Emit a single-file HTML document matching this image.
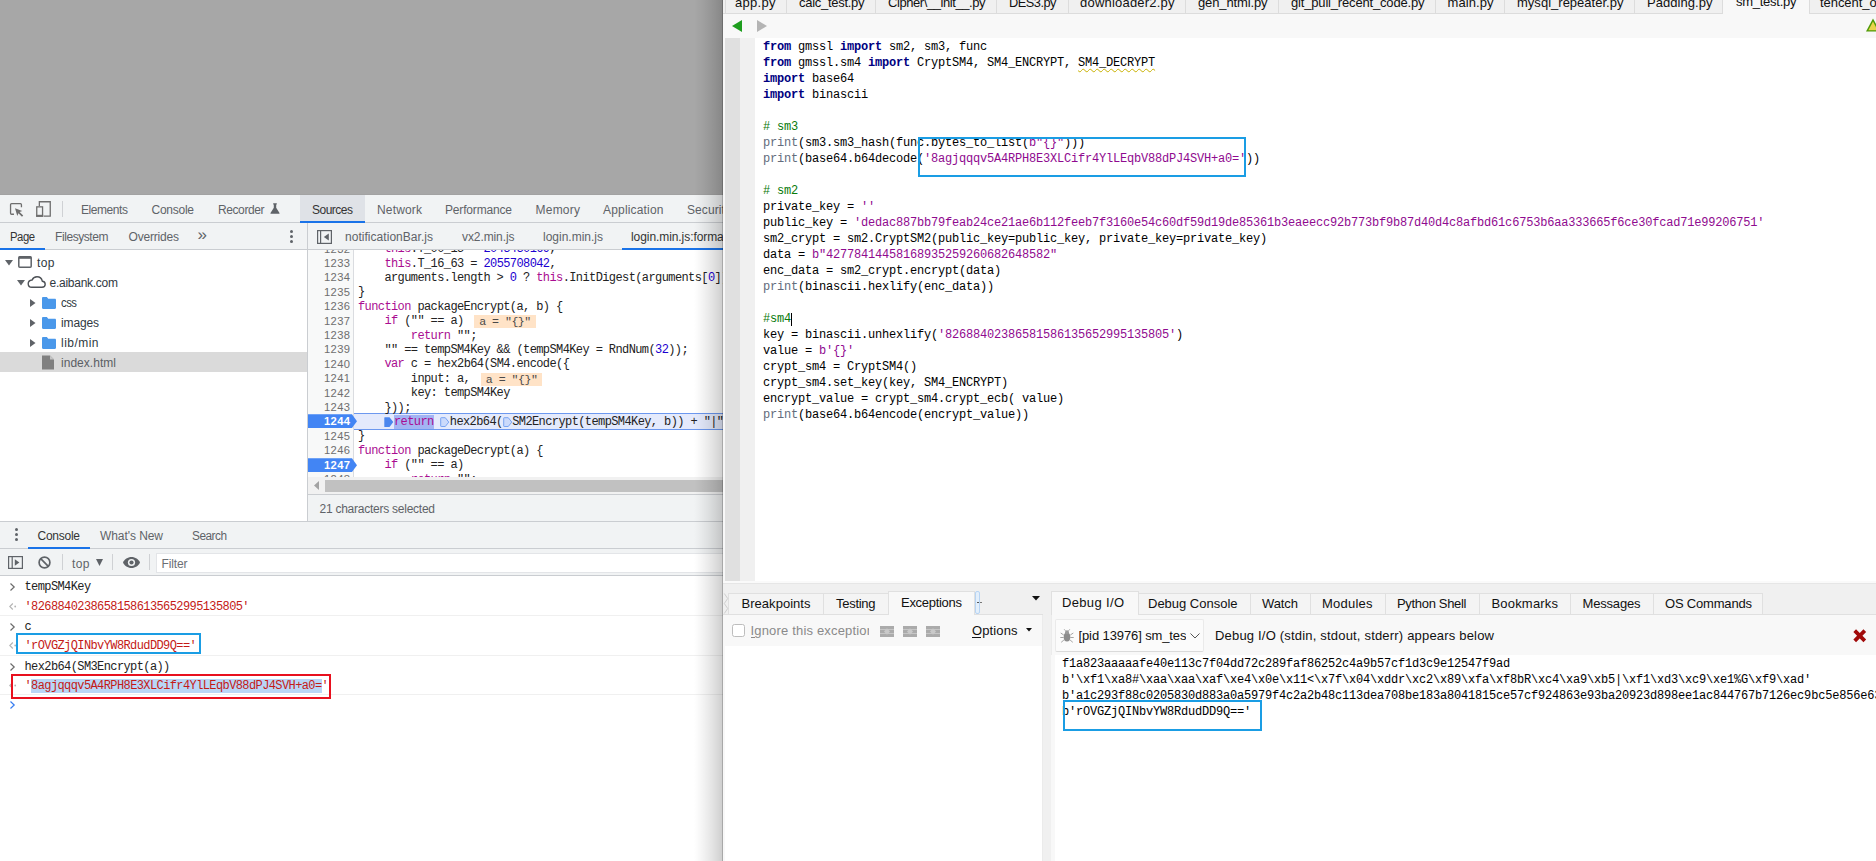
<!DOCTYPE html>
<html><head><meta charset="utf-8"><title>devtools + ide</title>
<style>
html,body{margin:0;padding:0}
body{width:1876px;height:861px;overflow:hidden;background:#fff;position:relative;font-family:"Liberation Sans", sans-serif}
.a{position:absolute;box-sizing:border-box}
.t{position:absolute;white-space:pre}
.s{font-family:"Liberation Sans", sans-serif}
.m{font-family:"Liberation Mono", monospace}

.cl{position:absolute;left:358px;white-space:pre;font-family:"Liberation Mono",monospace;font-size:12px;letter-spacing:-0.6px;line-height:14.4px;height:14.4px;color:#222;margin-top:0.8px}
.ln{position:absolute;left:308px;width:42.2px;text-align:right;white-space:pre;font-family:"Liberation Sans",sans-serif;font-size:11.2px;letter-spacing:0.3px;line-height:14.4px;height:14.4px;color:#6e6e6e}
.k{color:#aa0d91}.n{color:#1c00cf}
.w{display:inline-block;background:#ffe3c7;color:#4a4a4a;font-size:11.6px;letter-spacing:-0.5px;margin-left:10.5px;padding:0 5px;height:13px;line-height:13px;vertical-align:top;margin-top:0.7px}
.bm{display:inline-block;width:9.6px;letter-spacing:0;height:14.4px;vertical-align:top;position:relative}
.con{position:absolute;left:24.5px;white-space:pre;font-family:"Liberation Mono",monospace;font-size:12px;letter-spacing:-0.6px;line-height:16px;color:#222}
.str{color:#c41a16}
.pl{position:absolute;left:763px;white-space:pre;font-family:"Liberation Mono",monospace;font-size:12px;letter-spacing:-0.2px;line-height:16px;height:16px;color:#000}
.kw{color:#00007f;font-weight:bold;letter-spacing:-0.2px}
.bi{color:#636c7c}.ps{color:#8f0a8f}.pc{color:#0a7a0a}
.out{position:absolute;left:1062px;white-space:pre;font-family:"Liberation Mono",monospace;font-size:12px;letter-spacing:-0.2px;line-height:16px;height:16px;color:#000}
svg{position:absolute;overflow:visible}
</style></head>
<body>
<div class="a" id="devtools" style="left:0;top:0;width:724px;height:861px;overflow:hidden;background:#fff"><div class="a" style="left:0px;top:0px;width:724px;height:195px;background:#a7a7a7;"></div><div class="a" style="left:0px;top:194px;width:724px;height:1px;background:#a2a2a2;"></div><div class="a" style="left:0px;top:195px;width:724px;height:28px;background:#f1f3f4;border-bottom:1px solid #cacdd1;"></div><div class="a" style="left:300px;top:195px;width:65px;height:27px;background:#dfe2e7;"></div><div class="a" style="left:300px;top:221px;width:65px;height:2px;background:#1a73e8;"></div><svg style="left:9px;top:202px" width="16" height="16" viewBox="0 0 16 16"><path d="M12.450 5.200v-2.550a1 1 0 0 0-1-1h-8.900a1 1 0 0 0-1 1v8.600a1 1 0 0 0 1 1h2.400" fill="none" stroke="#6e6e6e" stroke-width="1.300"/><path d="M6 6.200l7.300 2.700-2.700 1.100 3.600 3.600-1.200 1.200-3.600-3.600-1.100 2.700z" fill="#6e6e6e"/></svg><svg style="left:35px;top:200px" width="17" height="18" viewBox="0 0 17 18"><path d="M4.350 6v-4.250h10.900v14.400h-6.500" fill="none" stroke="#6e6e6e" stroke-width="1.300"/><rect x="1.750" y="6.850" width="5.800" height="9.300" fill="none" stroke="#6e6e6e" stroke-width="1.300"/><rect x="1.100" y="14.800" width="7.100" height="2" fill="#6e6e6e"/></svg><div class="a" style="left:62px;top:201px;width:1px;height:16px;background:#cfd1d4;"></div><span class="t s" style="left:81px;top:199.8px;font-size:12px;color:#5f6368;line-height:20px;letter-spacing:-0.433px;">Elements</span><span class="t s" style="left:151.5px;top:199.8px;font-size:12px;color:#5f6368;line-height:20px;letter-spacing:-0.255px;">Console</span><span class="t s" style="left:218px;top:199.8px;font-size:12px;color:#5f6368;line-height:20px;letter-spacing:-0.408px;">Recorder</span><svg style="left:270px;top:203px" width="10" height="11" viewBox="0 0 10 11"><path d="M3.2 0.3h3.6v1.2h-.6v3.2l3.3 5.2c.2.4 0 .8-.5.8h-8c-.5 0-.7-.4-.5-.8l3.3-5.2v-3.2h-.6z" fill="#5f6368"/></svg><span class="t s" style="left:311.5px;top:199.8px;font-size:12px;color:#333;line-height:20px;letter-spacing:-0.500px;transform:scaleX(0.999);transform-origin:0 50%;">Sources</span><span class="t s" style="left:377px;top:199.8px;font-size:12px;color:#5f6368;line-height:20px;letter-spacing:0.164px;">Network</span><span class="t s" style="left:445px;top:199.8px;font-size:12px;color:#5f6368;line-height:20px;letter-spacing:-0.170px;">Performance</span><span class="t s" style="left:535.5px;top:199.8px;font-size:12px;color:#5f6368;line-height:20px;letter-spacing:0.231px;">Memory</span><span class="t s" style="left:603px;top:199.8px;font-size:12px;color:#5f6368;line-height:20px;letter-spacing:0.178px;">Application</span><span class="t s" style="left:687px;top:199.8px;font-size:12px;color:#5f6368;line-height:20px;letter-spacing:0.092px;">Security</span><div class="a" style="left:0px;top:223px;width:724px;height:27px;background:#f1f3f4;border-bottom:1px solid #cacdd1;"></div><div class="a" style="left:0px;top:248px;width:45px;height:2px;background:#1a73e8;"></div><span class="t s" style="left:10px;top:226.9px;font-size:12px;color:#333;line-height:20px;letter-spacing:-0.500px;transform:scaleX(0.942);transform-origin:0 50%;">Page</span><span class="t s" style="left:55px;top:226.9px;font-size:12px;color:#5f6368;line-height:20px;letter-spacing:-0.427px;">Filesystem</span><span class="t s" style="left:128.5px;top:226.9px;font-size:12px;color:#5f6368;line-height:20px;letter-spacing:-0.189px;">Overrides</span><span class="t s" style="left:197.5px;top:225.0px;font-size:17px;color:#5f6368;line-height:20px;letter-spacing:0.000px;">»</span><div class="a" style="left:290px;top:229.5px;width:3px;height:3px;background:#5f6368;border-radius:50%;"></div><div class="a" style="left:290px;top:234.5px;width:3px;height:3px;background:#5f6368;border-radius:50%;"></div><div class="a" style="left:290px;top:239.5px;width:3px;height:3px;background:#5f6368;border-radius:50%;"></div><div class="a" style="left:307px;top:223px;width:1px;height:299px;background:#cacdd1;"></div><svg style="left:317px;top:230px" width="15" height="14" viewBox="0 0 15 14"><rect x="0.6" y="0.6" width="13.8" height="12.8" fill="none" stroke="#5f6368" stroke-width="1.2"/><path d="M3.6 0.6v12.8" stroke="#5f6368" stroke-width="1.2"/><path d="M11.800 3.400v7.200l-5-3.600z" fill="#5f6368"/></svg><span class="t s" style="left:345px;top:226.9px;font-size:12px;color:#5f6368;line-height:20px;letter-spacing:0.036px;">notificationBar.js</span><span class="t s" style="left:462px;top:226.9px;font-size:12px;color:#5f6368;line-height:20px;letter-spacing:-0.094px;">vx2.min.js</span><span class="t s" style="left:543px;top:226.9px;font-size:12px;color:#5f6368;line-height:20px;letter-spacing:-0.003px;">login.min.js</span><span class="t s" style="left:631px;top:226.9px;font-size:12px;color:#333;line-height:20px;letter-spacing:-0.074px;">login.min.js:formatted</span><div class="a" style="left:622px;top:248px;width:110px;height:2px;background:#1a73e8;"></div><svg style="left:5px;top:260px" width="8" height="6" viewBox="0 0 8 6"><path d="M0 0h8l-4 5.5z" fill="#5f6368"/></svg><svg style="left:18px;top:256px" width="14" height="12" viewBox="0 0 14 12"><rect x="0.8" y="0.8" width="12.400" height="10.400" rx="1" fill="none" stroke="#5f6368" stroke-width="1.5"/><rect x="0.8" y="0.4" width="12.400" height="2.400" fill="#5f6368"/></svg><span class="t s" style="left:37px;top:253.1px;font-size:12px;color:#303942;line-height:20px;letter-spacing:0.406px;">top</span><svg style="left:17px;top:280px" width="8" height="6" viewBox="0 0 8 6"><path d="M0 0h8l-4 5.5z" fill="#5f6368"/></svg><svg style="left:26.500px;top:276px" width="19" height="12" viewBox="0 0 19 12"><path d="M4.8 11.200h10.200c1.800 0 3.200-1.300 3.200-3 0-1.600-1.300-2.900-2.900-3-.5-2.500-2.600-4.400-5.300-4.400-2.200 0-4.100 1.300-4.900 3.200-2.200.2-3.900 1.800-3.900 3.700 0 2 1.600 3.500 3.600 3.500z" fill="none" stroke="#4d5156" stroke-width="1.400"/></svg><span class="t s" style="left:49.5px;top:273.1px;font-size:12px;color:#303942;line-height:20px;letter-spacing:-0.261px;">e.aibank.com</span><svg style="left:30px;top:298.5px" width="6" height="8" viewBox="0 0 6 8"><path d="M0 0v8l5.5-4z" fill="#5f6368"/></svg><svg style="left:42px;top:297px" width="14" height="12" viewBox="0 0 15 12" preserveAspectRatio="none"><path d="M0 1.2c0-.7.5-1.2 1.2-1.2h4l1.5 1.7h7.1c.7 0 1.2.5 1.2 1.2v7.9c0 .7-.5 1.2-1.2 1.2h-12.600c-.7 0-1.2-.5-1.2-1.2z" fill="#4a98ea"/></svg><span class="t s" style="left:61px;top:293.1px;font-size:12px;color:#303942;line-height:20px;letter-spacing:-0.500px;transform:scaleX(0.941);transform-origin:0 50%;">css</span><svg style="left:30px;top:318.5px" width="6" height="8" viewBox="0 0 6 8"><path d="M0 0v8l5.5-4z" fill="#5f6368"/></svg><svg style="left:42px;top:317px" width="14" height="12" viewBox="0 0 15 12" preserveAspectRatio="none"><path d="M0 1.2c0-.7.5-1.2 1.2-1.2h4l1.5 1.7h7.1c.7 0 1.2.5 1.2 1.2v7.9c0 .7-.5 1.2-1.2 1.2h-12.600c-.7 0-1.2-.5-1.2-1.2z" fill="#4a98ea"/></svg><span class="t s" style="left:61px;top:313.1px;font-size:12px;color:#303942;line-height:20px;letter-spacing:-0.138px;">images</span><svg style="left:30px;top:338.5px" width="6" height="8" viewBox="0 0 6 8"><path d="M0 0v8l5.5-4z" fill="#5f6368"/></svg><svg style="left:42px;top:337px" width="14" height="12" viewBox="0 0 15 12" preserveAspectRatio="none"><path d="M0 1.2c0-.7.5-1.2 1.2-1.2h4l1.5 1.7h7.1c.7 0 1.2.5 1.2 1.2v7.9c0 .7-.5 1.2-1.2 1.2h-12.600c-.7 0-1.2-.5-1.2-1.2z" fill="#4a98ea"/></svg><span class="t s" style="left:61px;top:333.1px;font-size:12px;color:#303942;line-height:20px;letter-spacing:0.469px;">lib/min</span><div class="a" style="left:0px;top:352px;width:307px;height:20px;background:#dadada;"></div><svg style="left:42px;top:355px" width="12" height="15" viewBox="0 0 12 14"><path d="M0 0h8l4 4v10h-12z" fill="#808080"/><path d="M8 0v4h4z" fill="#c4c4c4"/></svg><span class="t s" style="left:61px;top:353.1px;font-size:12px;color:#5a5e64;line-height:20px;letter-spacing:0.033px;">index.html</span><div class="a" style="left:308px;top:250px;width:416px;height:227px;overflow:hidden;background:#fff"><div class="a" style="left:-308px;top:-250px;width:724px;height:800px"><div class="a" style="left:308px;top:250px;width:45.5px;height:227px;background:#f8f9f9;border-right:1px solid #dadce0;"></div><div class="a" style="left:354px;top:413.40000000000293px;width:370px;height:16.2px;background:#e4eafc;border-top:1px solid #6c98ef;border-bottom:1px solid #6c98ef;"></div><svg style="left:308px;top:414.3px" width="50" height="14.400" viewBox="0 0 50 14.400"><path d="M0 0.300h44l5 6.900-5 6.900h-44z" fill="#4285f4"/></svg><svg style="left:308px;top:457.5px" width="50" height="14.400" viewBox="0 0 50 14.400"><path d="M0 0.300h44l5 6.900-5 6.900h-44z" fill="#4285f4"/></svg><div class="ln" style="top:241.5px;">1232</div><div class="cl" style="top:241.5px">    <span class="k">this</span>.T_00_15 = <span class="n">2043430169</span>,</div><div class="ln" style="top:255.9px;">1233</div><div class="cl" style="top:255.9px">    <span class="k">this</span>.T_16_63 = <span class="n">2055708042</span>,</div><div class="ln" style="top:270.3px;">1234</div><div class="cl" style="top:270.3px">    arguments.length &gt; <span class="n">0</span> ? <span class="k">this</span>.InitDigest(arguments[<span class="n">0</span>]) : <span class="k">this</span>.Init()</div><div class="ln" style="top:284.7px;">1235</div><div class="cl" style="top:284.7px">}</div><div class="ln" style="top:299.1px;">1236</div><div class="cl" style="top:299.1px"><span class="k">function</span> packageEncrypt(a, b) {</div><div class="ln" style="top:313.5px;">1237</div><div class="cl" style="top:313.5px">    <span class="k">if</span> (&quot;&quot; == a)<span class="w">a = &quot;{}&quot;</span></div><div class="ln" style="top:327.9px;">1238</div><div class="cl" style="top:327.9px">        <span class="k">return</span> &quot;&quot;;</div><div class="ln" style="top:342.3px;">1239</div><div class="cl" style="top:342.3px">    &quot;&quot; == tempSM4Key &amp;&amp; (tempSM4Key = RndNum(<span class="n">32</span>));</div><div class="ln" style="top:356.7px;">1240</div><div class="cl" style="top:356.7px">    <span class="k">var</span> c = hex2b64(SM4.encode({</div><div class="ln" style="top:371.1px;">1241</div><div class="cl" style="top:371.1px">        input: a,<span class="w">a = &quot;{}&quot;</span></div><div class="ln" style="top:385.5px;">1242</div><div class="cl" style="top:385.5px">        key: tempSM4Key</div><div class="ln" style="top:399.9px;">1243</div><div class="cl" style="top:399.9px">    }));</div><div class="ln" style="top:414.3px;color:#fff;font-weight:bold;">1244</div><div class="cl" style="top:414.3px">    <span class="bm"><svg style="left:0;top:1.500px" width="9.600" height="10.200" viewBox="0 0 9.600 10.200"><path d="M0.300 0.800q0-.5.500-.5h4.700l3.800 4.800-3.800 4.800h-4.700q-.5 0-.5-.5z" fill="#4a86ee"/></svg></span><span style="background:#a3b4f3"><span class="k">return</span></span> <span class="bm"><svg style="left:0;top:1.500px" width="9.600" height="10.200" viewBox="0 0 9.600 10.200"><path d="M0.700 1.200q0-.5.500-.5h4.100l3.500 4.400-3.500 4.400h-4.100q-.5 0-.5-.5z" fill="#cbdafb" stroke="#6e9df0" stroke-width="0.900"/></svg></span>hex2b64(<span class="bm"><svg style="left:0;top:1.500px" width="9.600" height="10.200" viewBox="0 0 9.600 10.200"><path d="M0.700 1.200q0-.5.500-.5h4.100l3.500 4.400-3.500 4.400h-4.100q-.5 0-.5-.5z" fill="#cbdafb" stroke="#6e9df0" stroke-width="0.900"/></svg></span>SM2Encrypt(tempSM4Key, b)) + &quot;|&quot; + c</div><div class="ln" style="top:428.7px;">1245</div><div class="cl" style="top:428.7px">}</div><div class="ln" style="top:443.1px;">1246</div><div class="cl" style="top:443.1px"><span class="k">function</span> packageDecrypt(a) {</div><div class="ln" style="top:457.5px;color:#fff;font-weight:bold;">1247</div><div class="cl" style="top:457.5px">    <span class="k">if</span> (&quot;&quot; == a)</div><div class="ln" style="top:471.9px;">1248</div><div class="cl" style="top:471.9px">        <span class="k">return</span> &quot;&quot;;</div></div></div><div class="a" style="left:308px;top:477px;width:416px;height:17px;background:#f1f1f1;"></div><div class="a" style="left:325px;top:479.5px;width:400px;height:12.5px;background:#c1c1c1;"></div><svg style="left:313.500px;top:481px" width="5" height="9" viewBox="0 0 5 9"><path d="M5 0v9l-5-4.500z" fill="#a3a3a3"/></svg><div class="a" style="left:308px;top:494px;width:416px;height:28px;background:#f1f3f4;border-top:1px solid #cacdd1;border-bottom:1px solid #cacdd1;"></div><div class="a" style="left:0px;top:521px;width:308px;height:1px;background:#cacdd1;"></div><span class="t s" style="left:319.5px;top:499.3px;font-size:12px;color:#5f6368;line-height:20px;letter-spacing:-0.249px;">21 characters selected</span><div class="a" style="left:0px;top:522px;width:724px;height:27px;background:#f1f3f4;border-bottom:1px solid #cacdd1;"></div><div class="a" style="left:15px;top:527.5px;width:3px;height:3px;background:#5f6368;border-radius:50%;"></div><div class="a" style="left:15px;top:532.5px;width:3px;height:3px;background:#5f6368;border-radius:50%;"></div><div class="a" style="left:15px;top:537.5px;width:3px;height:3px;background:#5f6368;border-radius:50%;"></div><div class="a" style="left:28px;top:547px;width:62px;height:2px;background:#1a73e8;"></div><span class="t s" style="left:37.5px;top:526.3px;font-size:12px;color:#333;line-height:20px;letter-spacing:-0.255px;">Console</span><span class="t s" style="left:100px;top:526.3px;font-size:12px;color:#5f6368;line-height:20px;letter-spacing:-0.071px;">What&#x27;s New</span><span class="t s" style="left:191.5px;top:526.3px;font-size:12px;color:#5f6368;line-height:20px;letter-spacing:-0.500px;transform:scaleX(0.985);transform-origin:0 50%;">Search</span><div class="a" style="left:0px;top:549px;width:724px;height:27px;background:#f1f3f4;border-bottom:1px solid #cacdd1;"></div><svg style="left:8px;top:555.500px" width="15" height="13" viewBox="0 0 15 13"><rect x="0.6" y="0.6" width="13.800" height="11.800" fill="none" stroke="#5f6368" stroke-width="1.200"/><path d="M4.200 0.6v11.800" stroke="#5f6368" stroke-width="1.200"/><path d="M6.800 3.300v6.400l4.600-3.200z" fill="#5f6368"/></svg><svg style="left:38px;top:555.500px" width="13" height="13" viewBox="0 0 13 13"><circle cx="6.500" cy="6.500" r="5.400" fill="none" stroke="#5f6368" stroke-width="1.700"/><path d="M2.700 2.700l7.600 7.600" stroke="#5f6368" stroke-width="1.700"/></svg><div class="a" style="left:62px;top:554px;width:1px;height:16px;background:#cfd1d4;"></div><span class="t s" style="left:72px;top:553.8px;font-size:12px;color:#5f6368;line-height:20px;letter-spacing:0.406px;">top</span><svg style="left:96px;top:558.500px" width="7" height="7" viewBox="0 0 8 7" preserveAspectRatio="none"><path d="M0 0h8l-4 7z" fill="#5f6368"/></svg><div class="a" style="left:112px;top:554px;width:1px;height:16px;background:#cfd1d4;"></div><svg style="left:122.500px;top:556.500px" width="17" height="11" viewBox="0 0 17 11"><path d="M8.500 0c-3.800 0-7 2.300-8.500 5.500 1.500 3.200 4.700 5.500 8.500 5.500s7-2.300 8.500-5.500c-1.500-3.200-4.700-5.500-8.500-5.500z" fill="#5f6368"/><circle cx="8.500" cy="5.500" r="3.600" fill="#f1f3f4"/><circle cx="8.500" cy="5.500" r="2.100" fill="#5f6368"/></svg><div class="a" style="left:149px;top:554px;width:1px;height:16px;background:#cfd1d4;"></div><div class="a" style="left:156px;top:552.5px;width:570px;height:20px;background:#fff;border:1px solid #e3e5e8;"></div><span class="t s" style="left:161.5px;top:554.3px;font-size:12px;color:#6b6f74;line-height:20px;letter-spacing:-0.134px;">Filter</span><svg style="left:10px;top:583.2px" width="5" height="8" viewBox="0 0 5 8"><path d="M0.500 0.500l3.700 3.500-3.700 3.500" fill="none" stroke="#6b6b6b" stroke-width="1.200"/></svg><div class="con" style="top:579.2px">tempSM4Key</div><svg style="left:8.500px;top:603.2px" width="8" height="7" viewBox="0 0 8 7"><path d="M3.800 0.500l-3 3 3 3" fill="none" stroke="#b3b3b3" stroke-width="1.100"/><circle cx="6.200" cy="3.500" r="0.900" fill="#b3b3b3"/></svg><div class="con str" style="top:598.7px">&#x27;82688402386581586135652995135805&#x27;</div><svg style="left:10px;top:622.5px" width="5" height="8" viewBox="0 0 5 8"><path d="M0.500 0.500l3.700 3.500-3.700 3.500" fill="none" stroke="#6b6b6b" stroke-width="1.200"/></svg><div class="con" style="top:618.5px">c</div><svg style="left:8.500px;top:642.1px" width="8" height="7" viewBox="0 0 8 7"><path d="M3.800 0.500l-3 3 3 3" fill="none" stroke="#b3b3b3" stroke-width="1.100"/><circle cx="6.200" cy="3.500" r="0.900" fill="#b3b3b3"/></svg><div class="con str" style="top:637.6px">&#x27;rOVGZjQINbvYW8RdudDD9Q==&#x27;</div><svg style="left:10px;top:662.5px" width="5" height="8" viewBox="0 0 5 8"><path d="M0.500 0.500l3.700 3.500-3.700 3.500" fill="none" stroke="#6b6b6b" stroke-width="1.200"/></svg><div class="con" style="top:658.5px">hex2b64(SM3Encrypt(a))</div><svg style="left:8.500px;top:682.4px" width="8" height="7" viewBox="0 0 8 7"><path d="M3.800 0.500l-3 3 3 3" fill="none" stroke="#b3b3b3" stroke-width="1.100"/><circle cx="6.200" cy="3.500" r="0.900" fill="#b3b3b3"/></svg><div class="con str" style="top:677.9px">'<span style="background:#b9d6f6">8agjqqqv5A4RPH8E3XLCifr4YlLEqbV88dPJ4SVH+a0=</span>'</div><div class="a" style="left:0px;top:615px;width:724px;height:1px;background:#f0f0f0;"></div><div class="a" style="left:0px;top:655px;width:724px;height:1px;background:#f0f0f0;"></div><div class="a" style="left:0px;top:693.5px;width:724px;height:1px;background:#f0f0f0;"></div><svg style="left:10px;top:700.5px" width="5" height="8" viewBox="0 0 5 8"><path d="M0.500 0.500l3.700 3.500-3.700 3.500" fill="none" stroke="#367cf1" stroke-width="1.200"/></svg><div class="a" style="left:16px;top:633px;width:185px;height:21px;border:2px solid #1a9de4;"></div><div class="a" style="left:11px;top:674px;width:320px;height:24.5px;border:2px solid #e8101e;"></div><div class="a" style="left:694px;top:0px;width:28px;height:861px;background:linear-gradient(to right,rgba(0,0,0,0) 0%,rgba(0,0,0,.035) 25%,rgba(0,0,0,.08) 50%,rgba(0,0,0,.13) 75%,rgba(0,0,0,.19) 100%);"></div><div class="a" style="left:722px;top:0px;width:1px;height:861px;background:rgba(0,0,0,.34);"></div></div><div class="a" id="ide" style="left:723px;top:0;width:1153px;height:861px;overflow:hidden;background:#f0f0f0"><div class="a" style="left:-723px;top:0;width:1876px;height:861px"><div class="a" style="left:723px;top:0px;width:1153px;height:14px;background:#f0f0f0;border-bottom:1px solid #dcdcdc;"></div><div class="a" style="left:725px;top:0px;width:1px;height:13px;background:#dcdcdc;"></div><div class="a" style="left:786px;top:0px;width:1px;height:13px;background:#dcdcdc;"></div><div class="a" style="left:875px;top:0px;width:1px;height:13px;background:#dcdcdc;"></div><div class="a" style="left:996px;top:0px;width:1px;height:13px;background:#dcdcdc;"></div><div class="a" style="left:1068px;top:0px;width:1px;height:13px;background:#dcdcdc;"></div><div class="a" style="left:1185px;top:0px;width:1px;height:13px;background:#dcdcdc;"></div><div class="a" style="left:1278px;top:0px;width:1px;height:13px;background:#dcdcdc;"></div><div class="a" style="left:1435px;top:0px;width:1px;height:13px;background:#dcdcdc;"></div><div class="a" style="left:1504px;top:0px;width:1px;height:13px;background:#dcdcdc;"></div><div class="a" style="left:1634px;top:0px;width:1px;height:13px;background:#dcdcdc;"></div><div class="a" style="left:1722px;top:0px;width:88px;height:14px;background:#f8f8f8;border-left:1px solid #dcdcdc;border-right:1px solid #dcdcdc;"></div><span class="t s" style="left:735px;top:-6.9px;font-size:13px;color:#111;line-height:20px;letter-spacing:0.291px;">app.py</span><span class="t s" style="left:799px;top:-6.9px;font-size:13px;color:#111;line-height:20px;letter-spacing:-0.287px;">calc_test.py</span><span class="t s" style="left:888px;top:-6.9px;font-size:13px;color:#111;line-height:20px;letter-spacing:-0.429px;">Cipher\__init__.py</span><span class="t s" style="left:1009px;top:-6.9px;font-size:13px;color:#111;line-height:20px;letter-spacing:-0.500px;transform:scaleX(0.983);transform-origin:0 50%;">DES3.py</span><span class="t s" style="left:1080px;top:-6.9px;font-size:13px;color:#111;line-height:20px;letter-spacing:0.208px;">downloader2.py</span><span class="t s" style="left:1198px;top:-6.9px;font-size:13px;color:#111;line-height:20px;letter-spacing:-0.133px;">gen_html.py</span><span class="t s" style="left:1291px;top:-6.9px;font-size:13px;color:#111;line-height:20px;letter-spacing:-0.174px;">git_pull_recent_code.py</span><span class="t s" style="left:1447.5px;top:-6.9px;font-size:13px;color:#111;line-height:20px;letter-spacing:0.078px;">main.py</span><span class="t s" style="left:1517px;top:-6.9px;font-size:13px;color:#111;line-height:20px;letter-spacing:0.017px;">mysql_repeater.py</span><span class="t s" style="left:1647px;top:-6.9px;font-size:13px;color:#111;line-height:20px;letter-spacing:0.049px;">Padding.py</span><span class="t s" style="left:1820px;top:-6.9px;font-size:13px;color:#111;line-height:20px;letter-spacing:-0.050px;">tencent_oauth.py</span><span class="t s" style="left:1736px;top:-8.5px;font-size:13px;color:#111;line-height:20px;letter-spacing:-0.262px;">sm_test.py</span><div class="a" style="left:723px;top:14px;width:1153px;height:23.5px;background:#f8f8f8;"></div><svg style="left:732px;top:20px" width="10" height="12" viewBox="0 0 10 12"><path d="M10 0v12l-10-6z" fill="#1e9e1e"/></svg><svg style="left:757px;top:20px" width="10" height="12" viewBox="0 0 10 12"><path d="M0 0v12l10-6z" fill="#b4b4b4"/></svg><svg style="left:1866px;top:18px" width="14" height="14" viewBox="0 0 14 14"><path d="M7 0.500l7 13h-14z" fill="#4e9a06"/><path d="M7 3.500l4.600 8.700h-9.200z" fill="#e8d44d"/></svg><div class="a" style="left:723px;top:37.5px;width:1153px;height:543.5px;background:#fff;"></div><div class="a" style="left:723px;top:37.5px;width:2px;height:543.5px;background:#f8f8f8;"></div><div class="a" style="left:725px;top:37.5px;width:15px;height:543.5px;background:#e0e0e0;"></div><div class="a" style="left:740px;top:37.5px;width:15px;height:543.5px;background:#f0f0f0;"></div><div class="a" style="left:723px;top:581px;width:1153px;height:2px;background:#fafafa;"></div><div class="a" style="left:723px;top:583px;width:1153px;height:1px;background:#e6e6e6;"></div><div class="pl" style="top:39px"><span class="kw">from</span> gmssl <span class="kw">import</span> sm2, sm3, func</div><div class="pl" style="top:55px"><span class="kw">from</span> gmssl.sm4 <span class="kw">import</span> CryptSM4, SM4_ENCRYPT, <span style="text-decoration:underline wavy #c8b000 1px;text-underline-offset:2px">SM4_DECRYPT</span></div><div class="pl" style="top:71px"><span class="kw">import</span> base64</div><div class="pl" style="top:87px"><span class="kw">import</span> binascii</div><div class="pl" style="top:119px"><span class="pc"># sm3</span></div><div class="pl" style="top:135px"><span class="bi">print</span>(sm3.sm3_hash(func.bytes_to_list(<span class="ps">b&quot;{}&quot;</span>)))</div><div class="pl" style="top:151px"><span class="bi">print</span>(base64.b64decode(<span class="ps">&#x27;8agjqqqv5A4RPH8E3XLCifr4YlLEqbV88dPJ4SVH+a0=&#x27;</span>))</div><div class="pl" style="top:183px"><span class="pc"># sm2</span></div><div class="pl" style="top:199px">private_key = <span class="ps">&#x27;&#x27;</span></div><div class="pl" style="top:215px">public_key = <span class="ps">&#x27;dedac887bb79feab24ce21ae6b112feeb7f3160e54c60df59d19de85361b3eaeecc92b773bf9b87d40d4c8afbd61c6753b6aa333665f6ce30fcad71e99206751&#x27;</span></div><div class="pl" style="top:231px">sm2_crypt = sm2.CryptSM2(public_key=public_key, private_key=private_key)</div><div class="pl" style="top:247px">data = <span class="ps">b&quot;42778414458168935259260682648582&quot;</span></div><div class="pl" style="top:263px">enc_data = sm2_crypt.encrypt(data)</div><div class="pl" style="top:279px"><span class="bi">print</span>(binascii.hexlify(enc_data))</div><div class="pl" style="top:311px"><span class="pc">#sm4</span><span style="display:inline-block;width:0;height:13px;border-left:1px solid #000;vertical-align:top;margin-top:1.500px"></span></div><div class="pl" style="top:327px">key = binascii.unhexlify(<span class="ps">&#x27;82688402386581586135652995135805&#x27;</span>)</div><div class="pl" style="top:343px">value = <span class="ps">b&#x27;{}&#x27;</span></div><div class="pl" style="top:359px">crypt_sm4 = CryptSM4()</div><div class="pl" style="top:375px">crypt_sm4.set_key(key, SM4_ENCRYPT)</div><div class="pl" style="top:391px">encrypt_value = crypt_sm4.crypt_ecb( value)</div><div class="pl" style="top:407px"><span class="bi">print</span>(base64.b64encode(encrypt_value))</div><div class="a" style="left:918px;top:137px;width:327.5px;height:39.5px;border:2px solid #1a9de4;"></div><div class="a" style="left:723px;top:614px;width:319.5px;height:1px;background:#e0e0e0;"></div><div class="a" style="left:728px;top:592.5px;width:95.5px;height:22px;background:#f4f4f4;border:1px solid #e0e0e0;"></div><div class="a" style="left:822.5px;top:592.5px;width:66.0px;height:22px;background:#f4f4f4;border:1px solid #e0e0e0;"></div><div class="a" style="left:887.5px;top:591px;width:87.5px;height:24px;background:#f8f8f8;border:1px solid #e0e0e0;border-bottom:none;"></div><span class="t s" style="left:741.5px;top:593.5px;font-size:13px;color:#111;line-height:20px;letter-spacing:0.034px;">Breakpoints</span><span class="t s" style="left:836px;top:593.5px;font-size:13px;color:#111;line-height:20px;letter-spacing:-0.284px;">Testing</span><span class="t s" style="left:901px;top:592.5px;font-size:13px;color:#111;line-height:20px;letter-spacing:-0.288px;">Exceptions</span><div class="a" style="left:975px;top:591px;width:4.5px;height:23px;background:#e3effb;border:1px solid #b7d4f3;border-radius:2px;"></div><div class="a" style="left:976.5px;top:601.5px;width:2px;height:1px;background:#555;"></div><div class="a" style="left:980px;top:601.5px;width:1.5px;height:1px;background:#777;"></div><svg style="left:1031.500px;top:596px" width="8" height="5" viewBox="0 0 8 5"><path d="M0 0h8l-4 4.500z" fill="#111"/></svg><svg style="left:723.500px;top:593px" width="5" height="21" viewBox="0 0 5 21"><path d="M0.300 0.500l3.400 5-3.400 5 3.400 5-3.400 5" fill="none" stroke="#c9c9c9" stroke-width="0.900"/></svg><div class="a" style="left:723px;top:615px;width:319.5px;height:31px;background:#f8f8f8;"></div><div class="a" style="left:725px;top:646px;width:317.5px;height:215px;background:#fff;"></div><div class="a" style="left:723px;top:646px;width:2px;height:215px;background:#f8f8f8;"></div><div class="a" style="left:1042px;top:615px;width:1px;height:246px;background:#ebebeb;"></div><div class="a" style="left:732px;top:624px;width:13px;height:13px;background:#fff;border:1px solid #bdbdbd;border-radius:2.500px;"></div><span class="t s" style="left:750.5px;top:620.5px;font-size:13px;color:#8a8a8a;line-height:20px;letter-spacing:0.177px;width:118px;overflow:hidden;">Ignore this exception</span><div class="a" style="left:751px;top:637px;width:4px;height:1px;background:#8a8a8a;"></div><svg style="left:880px;top:625.500px" width="14" height="11" viewBox="0 0 14 11"><rect width="14" height="11" fill="#ababab"/><path d="M0 3.500h14M0 7.500h14" stroke="#c6c6c6" stroke-width="1"/><path d="M7 2.300l3 3.200-3 3.200-3-3.200z" fill="#c9c9c9"/></svg><svg style="left:903px;top:625.500px" width="14" height="11" viewBox="0 0 14 11"><rect width="14" height="11" fill="#ababab"/><path d="M0 3.500h14M0 7.500h14" stroke="#c6c6c6" stroke-width="1"/><path d="M7 2.300l3 3.200-3 3.200-3-3.200z" fill="#c9c9c9"/></svg><svg style="left:926px;top:625.500px" width="14" height="11" viewBox="0 0 14 11"><rect width="14" height="11" fill="#ababab"/><path d="M0 3.500h14M0 7.500h14" stroke="#c6c6c6" stroke-width="1"/><path d="M7 2.300l3 3.200-3 3.200-3-3.200z" fill="#c9c9c9"/></svg><span class="t s" style="left:972px;top:620.5px;font-size:13px;color:#111;line-height:20px;letter-spacing:0.115px;">Options</span><div class="a" style="left:972px;top:637px;width:9px;height:1px;background:#111;"></div><svg style="left:1026px;top:628px" width="6" height="4" viewBox="0 0 6 4"><path d="M0 0h6l-3 3.500z" fill="#111"/></svg><div class="a" style="left:1051px;top:614px;width:825px;height:1px;background:#e0e0e0;"></div><div class="a" style="left:1051px;top:591px;width:87.5px;height:24px;background:#f8f8f8;border:1px solid #e0e0e0;border-bottom:none;"></div><div class="a" style="left:1137.5px;top:592.5px;width:113.0px;height:22px;background:#f4f4f4;border:1px solid #e0e0e0;"></div><span class="t s" style="left:1148px;top:593.5px;font-size:13px;color:#111;line-height:20px;letter-spacing:-0.010px;">Debug Console</span><div class="a" style="left:1249.5px;top:592.5px;width:61.0px;height:22px;background:#f4f4f4;border:1px solid #e0e0e0;"></div><span class="t s" style="left:1262px;top:593.5px;font-size:13px;color:#111;line-height:20px;letter-spacing:-0.090px;">Watch</span><div class="a" style="left:1309.5px;top:592.5px;width:76.0px;height:22px;background:#f4f4f4;border:1px solid #e0e0e0;"></div><span class="t s" style="left:1322px;top:593.5px;font-size:13px;color:#111;line-height:20px;letter-spacing:0.227px;">Modules</span><div class="a" style="left:1384.5px;top:592.5px;width:95.0px;height:22px;background:#f4f4f4;border:1px solid #e0e0e0;"></div><span class="t s" style="left:1397px;top:593.5px;font-size:13px;color:#111;line-height:20px;letter-spacing:-0.318px;">Python Shell</span><div class="a" style="left:1478.5px;top:592.5px;width:92.0px;height:22px;background:#f4f4f4;border:1px solid #e0e0e0;"></div><span class="t s" style="left:1491.5px;top:593.5px;font-size:13px;color:#111;line-height:20px;letter-spacing:0.184px;">Bookmarks</span><div class="a" style="left:1569.5px;top:592.5px;width:84.0px;height:22px;background:#f4f4f4;border:1px solid #e0e0e0;"></div><span class="t s" style="left:1582.5px;top:593.5px;font-size:13px;color:#111;line-height:20px;letter-spacing:-0.179px;">Messages</span><div class="a" style="left:1652.5px;top:592.5px;width:110.0px;height:22px;background:#f4f4f4;border:1px solid #e0e0e0;"></div><span class="t s" style="left:1665px;top:593.5px;font-size:13px;color:#111;line-height:20px;letter-spacing:-0.188px;">OS Commands</span><span class="t s" style="left:1062px;top:592.5px;font-size:13px;color:#111;line-height:20px;letter-spacing:0.342px;">Debug I/O</span><div class="a" style="left:1051px;top:615px;width:825px;height:40px;background:#f8f8f8;"></div><div class="a" style="left:1051px;top:615px;width:1px;height:246px;background:#ebebeb;"></div><div class="a" style="left:1054.5px;top:655px;width:821.5px;height:206px;background:#fff;"></div><div class="a" style="left:1051px;top:655px;width:3.5px;height:206px;background:#f8f8f8;"></div><div class="a" style="left:1054.5px;top:618.5px;width:149px;height:33.5px;background:#fbfbfb;border:1px solid #eaeaea;border-bottom-color:#dadada;border-radius:2px;"></div><svg style="left:1060px;top:628.500px" width="14" height="14" viewBox="0 0 14 14"><ellipse cx="7" cy="8" rx="3.300" ry="4.600" fill="#8c8c8c"/><circle cx="7" cy="3.300" r="2" fill="#9a9a9a"/><path d="M3.700 6l-3-2M3.700 8.500h-3.400M3.900 11l-2.700 2.300M10.300 6l3-2M10.300 8.500h3.400M10.100 11l2.700 2.300M5.500 1.800l-1.300-1.500M8.500 1.800l1.300-1.500" stroke="#9a9a9a" stroke-width="0.900" fill="none"/></svg><span class="t s" style="left:1078.5px;top:626.0px;font-size:13px;color:#111;line-height:20px;letter-spacing:-0.109px;width:107px;overflow:hidden;">[pid 13976] sm_test</span><svg style="left:1190px;top:632.500px" width="10" height="6" viewBox="0 0 10 6"><path d="M0.500 0.500l4.500 4.500 4.500-4.500" fill="none" stroke="#555" stroke-width="1"/></svg><span class="t s" style="left:1215px;top:626.0px;font-size:13px;color:#111;line-height:20px;letter-spacing:0.190px;">Debug I/O (stdin, stdout, stderr) appears below</span><svg style="left:1852.500px;top:628.500px" width="13.500" height="13.500" viewBox="0 0 13.500 13.500"><path d="M1.700 1.700l10.100 10.100M11.800 1.700l-10.100 10.100" stroke="#a10a0a" stroke-width="3.800"/></svg><div class="out" style="top:656px">f1a823aaaaafe40e113c7f04dd72c289faf86252c4a9b57cf1d3c9e12547f9ad</div><div class="out" style="top:672px">b&#x27;\xf1\xa8#\xaa\xaa\xaf\xe4\x0e\x11&lt;\x7f\x04\xddr\xc2\x89\xfa\xf8bR\xc4\xa9\xb5|\xf1\xd3\xc9\xe1%G\xf9\xad&#x27;</div><div class="out" style="top:688px">b&#x27;a1c293f88c0205830d883a0a5979f4c2a2b48c113dea708be183a8041815ce57cf924863e93ba20923d898ee1ac844767b7126ec9bc5e856e63d1a07f2a</div><div class="out" style="top:704px">b&#x27;rOVGZjQINbvYW8RdudDD9Q==&#x27;</div><div class="a" style="left:1063px;top:699.5px;width:199px;height:31px;border:2px solid #1a9de4;"></div></div></div>
</body></html>
